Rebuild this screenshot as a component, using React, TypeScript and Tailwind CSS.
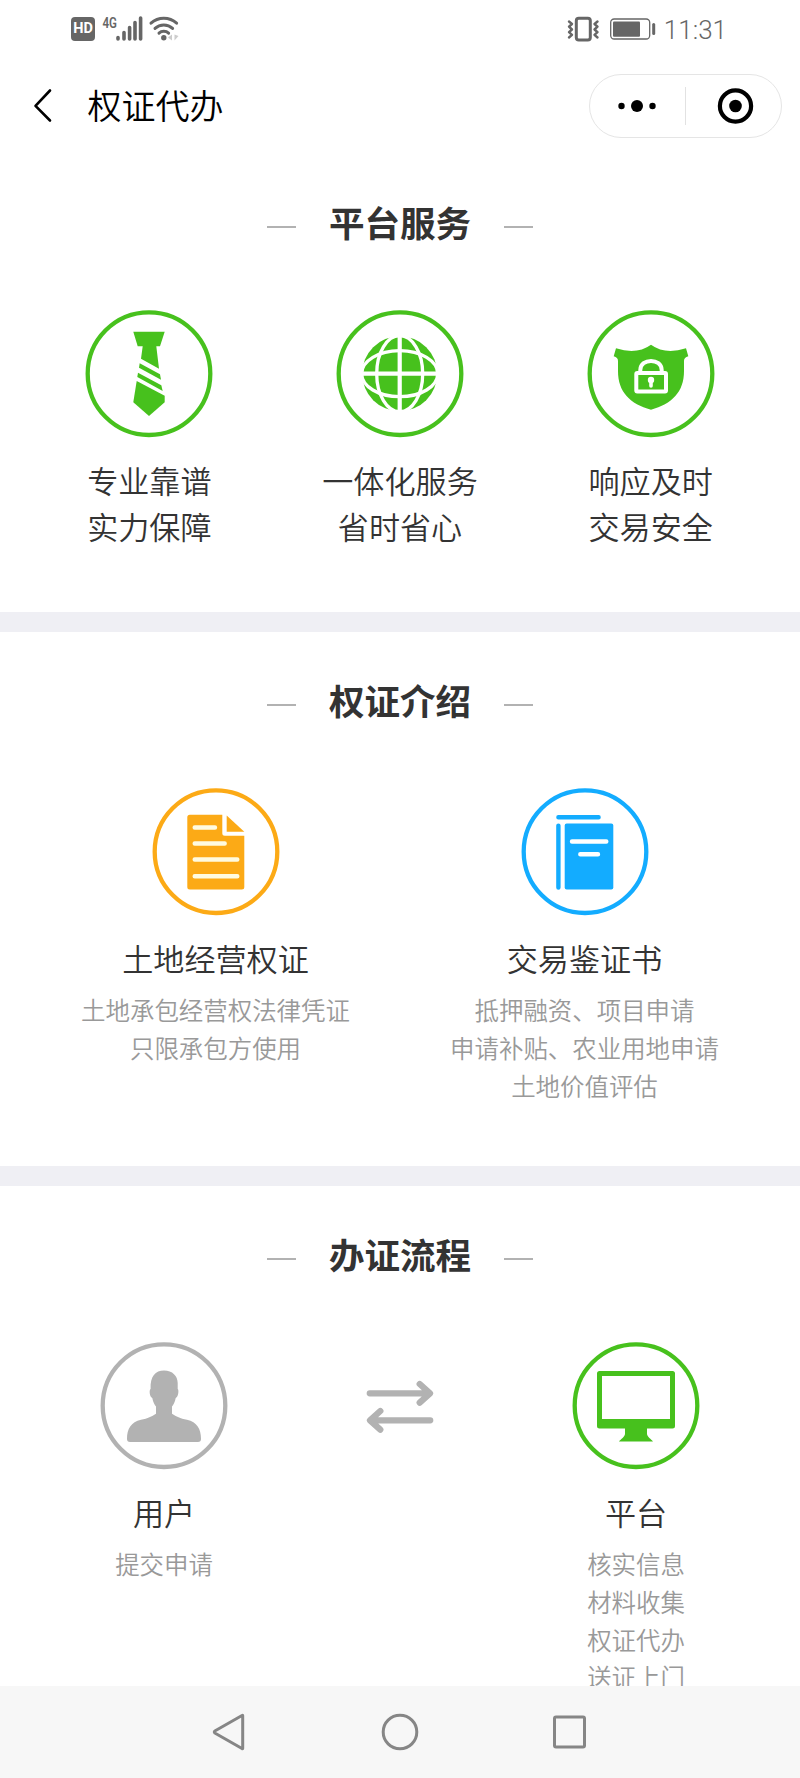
import type { ReactNode } from "react";

function StatusBar() {
  return (
    <div className="flex h-[60px] shrink-0 items-start justify-between pl-[71px] pr-[73px] pt-2 text-[#666]">
      <div className="flex items-start">
        <span className="mt-[9px] flex h-6 w-6 items-center justify-center rounded-[4px] bg-[#666] pt-px font-['Roboto'] text-[14.5px] font-bold leading-none text-white">
          HD
        </span>
        <svg width="86" height="36" viewBox="95 8 86 36" className="block" fill="currentColor">
          <text x="102.5" y="27.6" fontSize="15.5" fontWeight="600" fontFamily="Roboto, sans-serif" textLength="14.5" lengthAdjust="spacingAndGlyphs">
            4G
          </text>
          <g stroke="currentColor" strokeWidth="3.6" strokeLinecap="round">
            <path d="M118 37.6v1.4M124 32.6V39M129.6 27.6V39M135 22.6V39M140.600 18V39" />
          </g>
          <g fill="none" stroke="currentColor" strokeWidth="3" strokeLinecap="round">
            <path d="M151 23.2a19 19 0 0 1 25.600 0" />
            <path d="M155 28.400a12.800 12.800 0 0 1 17.600 0" />
            <path d="M159 33.200a7 7 0 0 1 9.600 0" />
          </g>
          <circle cx="163.800" cy="37.800" r="2.700" />
          <path d="M172 34.500v6l-4-3zM174.500 34.500v6l4-4.500z" fill="#ccc" />
        </svg>
      </div>
      <div className="flex items-start pt-2">
        <svg width="92" height="28" viewBox="565 16 92 28" className="block" fill="none" stroke="currentColor">
          <rect x="576.300" y="18.300" width="14" height="21.800" rx="2.500" strokeWidth="3" />
          <path d="M569 21.500l3 2.500-3 2.700 3 2.800-3 2.700 3 2.700-3 2.600M597.500 21.500l-3 2.500 3 2.700-3 2.800 3 2.700-3 2.700 3 2.600" strokeWidth="2.400" strokeLinejoin="round" strokeLinecap="round" />
          <rect x="610.700" y="19" width="39" height="20" rx="3.500" strokeWidth="1.300" />
          <rect x="613" y="21.500" width="27" height="15.300" rx="1" fill="currentColor" stroke="none" />
          <path d="M653.700 24.500v9" strokeWidth="3" strokeLinecap="round" />
        </svg>
        <span className="pl-[7px] font-['Roboto'] text-[26px] font-light leading-[28px]">11:31</span>
      </div>
    </div>
  );
}

function TitleBar() {
  return (
    <div className="flex h-[93.5px] shrink-0 items-start pl-[33px] pr-[18px] pt-[14px] text-black">
      <svg width="20" height="63" viewBox="0 0 20 63" className="block" fill="none" stroke="currentColor" strokeWidth="2.6" strokeLinecap="round" strokeLinejoin="round">
        <path d="M17 16.500L2.500 31.800L17 46.500" />
      </svg>
      <h1 className="pl-[34.5px] text-[34px] font-[350] leading-[62px]">权证代办</h1>
      <div className="ml-auto flex h-[64px] w-[193px] items-center rounded-full border border-[#e5e5e5]">
        <svg width="95" height="40" viewBox="0 0 95 40" className="block">
          <circle cx="31.500" cy="20" r="3.200" />
          <circle cx="47" cy="20" r="6" />
          <circle cx="62.500" cy="20" r="3.200" />
        </svg>
        <div className="h-[38px] w-px bg-[#e2e2e2]" />
        <svg width="95" height="40" viewBox="0 0 95 40" className="block">
          <circle cx="49.500" cy="20" r="15.600" fill="none" stroke="black" strokeWidth="4.200" />
          <circle cx="49.500" cy="20" r="6.300" />
        </svg>
      </div>
    </div>
  );
}

function SectionTitle({ children }: { children: ReactNode }) {
  return (
    <div className="flex h-[156px] items-start justify-center gap-[33px] pt-[42px]">
      <span className="mt-[30px] h-[2px] w-[29px] bg-[#b2b2b2]" />
      <h2 className="text-[35.55px] font-bold leading-[52px] text-[#333]">{children}</h2>
      <span className="mt-[30px] h-[2px] w-[29px] bg-[#b2b2b2]" />
    </div>
  );
}

function Badge({ color, children }: { color: string; children: ReactNode }) {
  return (
    <svg width="128" height="128" viewBox="0 0 128 128" className="-mb-px block" fill={color}>
      <circle cx="64" cy="63.700" r="61.300" fill="none" stroke={color} strokeWidth="4.300" />
      {children}
    </svg>
  );
}

const GREEN = "#47c11d";
const ORANGE = "#fcaa16";
const BLUE = "#13acff";
const GRAY = "#b2b2b2";

function TieBadge() {
  return (
    <Badge color={GREEN}>
      <path d="M48.300 21.700H79.700L75 36.300H71.300L74 58.700L56 48.700L57.700 36.300H52.700Z" />
      <path d="M54.700 53.300L75 64.300L76 69.700L54 57.700Z" />
      <path d="M53 62.700L76.300 75.300L77.700 81L52.300 67Z" />
      <path d="M51.700 71L79.700 85.700V92.300L64 106L48.300 92.300Z" />
    </Badge>
  );
}

function GlobeBadge() {
  return (
    <Badge color={GREEN}>
      <circle cx="63.700" cy="63.700" r="37.500" />
      <g fill="none" stroke="white" strokeWidth="3.300">
        <ellipse cx="63.700" cy="63.700" rx="38" ry="23" />
        <ellipse cx="63.700" cy="63.700" rx="23" ry="38" />
        <path d="M63.700 25V102M25 63.700H102" strokeWidth="4.200" />
      </g>
    </Badge>
  );
}

function ShieldBadge() {
  return (
    <Badge color={GREEN}>
      <path d="M64 34.700Q78 45 99 38.300L101.300 46.300Q97 47.500 97 51V61C97 82 85 94 64 99.700C43 94 31 82 31 61V51Q31 47.500 26.700 46.300L29 38.300Q50 45 64 34.700Z" />
      <g fill="none" stroke="white" strokeWidth="4">
        <rect x="49.300" y="63" width="29.700" height="18.400" rx="1" />
        <path d="M53.300 62V60C53.300 47.900 74.700 47.900 74.700 60V62" />
      </g>
      <circle cx="64" cy="70" r="3.200" fill="white" />
      <path d="M64 70V76" stroke="white" strokeWidth="3.600" strokeLinecap="round" />
    </Badge>
  );
}

function DocumentBadge() {
  return (
    <Badge color={ORANGE}>
      <path d="M37.800 26.800H70.300V45.300Q70.300 47.800 72.800 47.800H92.300V99Q92.300 101.500 89.800 101.500H37.800Q35.300 101.500 35.300 99V29.300Q35.300 26.800 37.800 26.800Z" />
      <path d="M74.700 27.600L92.300 43.800H74.700Z" />
      <path d="M42.700 39.500H63M42.700 55.500H72.700M42.700 71.500H85.300M42.700 88.200H85.300" stroke="#fffbe0" strokeWidth="4.400" strokeLinecap="round" />
    </Badge>
  );
}

function BookBadge() {
  return (
    <Badge color={BLUE}>
      <rect x="43.700" y="35.500" width="48.600" height="66" rx="2" />
      <path d="M37.400 29.200H77.600M37.400 37.600V99.500" stroke={BLUE} strokeWidth="4.400" strokeLinecap="round" />
      <path d="M51 53.500H85.300M59.300 66.200H77" stroke="white" strokeWidth="4.400" strokeLinecap="round" />
    </Badge>
  );
}

function UserBadge() {
  return (
    <Badge color={GRAY}>
      <path d="M64 28.500C72.500 28.500 77.700 34 77.700 41V47C79 47.500 78.600 55 75.700 56C75 60 73.500 62.500 72 64.500V71.800C76.500 74.500 80 76.500 87 77.800C97 80 101 87 101 97Q101 100 98 100H30Q27 100 27 97C27 87 31 80 41 77.800C48 76.500 51.500 74.500 56 71.800V64.500C54.500 62.500 53 60 52.300 56C49.400 55 49 47.500 50.600 47C50 34 55.500 28.500 64 28.500Z" />
    </Badge>
  );
}

function MonitorBadge() {
  return (
    <Badge color={GREEN}>
      <path fillRule="evenodd" d="M27.500 29H100.500Q103 29 103 31.500V84Q103 86.500 100.500 86.500H75V92C75.300 95 79 97 81 99.500H47C49 97 52.700 95 53 92V86.500H27.500Q25 86.500 25 84V31.500Q25 29 27.500 29ZM30 34V77H98V34Z" />
    </Badge>
  );
}

function SwapArrows() {
  return (
    <svg width="68" height="54" viewBox="366 1380 68 54" className="mt-[38px] block" fill="none" stroke={GRAY} strokeWidth="6.300" strokeLinecap="round" strokeLinejoin="round">
      <path d="M369.800 1393.300H429.500M419.700 1384L430 1393.300L419.700 1402.600" />
      <path d="M430.200 1420.300H370.500M380.300 1411L370 1420.300L380.300 1429.600" />
    </svg>
  );
}

function Item({ icon, title, notes = [] }: { icon: ReactNode; title: string[]; notes?: string[] }) {
  return (
    <div className="flex flex-col items-center whitespace-nowrap text-center font-[350]">
      {icon}
      <div className="pt-[20px] text-[31.1px] leading-[46.7px] text-[#333]">
        {title.map((line) => (
          <p key={line}>{line}</p>
        ))}
      </div>
      <div className="pt-[9px] text-[24.44px] leading-[37.9px] text-[#999]">
        {notes.map((line) => (
          <p key={line}>{line}</p>
        ))}
      </div>
    </div>
  );
}

function NavigationBar() {
  return (
    <div className="flex h-[92px] shrink-0 items-center justify-center gap-[130px] bg-[#f7f7f7]">
      <svg width="40" height="40" viewBox="0 0 40 40" className="block" fill="none" stroke="#868686" strokeWidth="3" strokeLinejoin="round">
        <path d="M32.700 3.500V36.500Q32.700 37 32 36.500L4.800 21Q3.800 20 4.800 19L32 3.500Q32.700 3 32.700 3.500Z" />
      </svg>
      <svg width="40" height="40" viewBox="0 0 40 40" className="block" fill="none" stroke="#868686" strokeWidth="3">
        <circle cx="20" cy="20" r="16.800" />
      </svg>
      <svg width="40" height="40" viewBox="0 0 40 40" className="block" fill="none" stroke="#868686" strokeWidth="3">
        <rect x="4.500" y="5" width="30" height="30" rx="1.500" />
      </svg>
    </div>
  );
}

export default function App() {
  return (
    <div className="flex h-[1778px] w-[800px] flex-col overflow-hidden bg-white font-['Noto_Sans_CJK_SC',sans-serif]">
      <StatusBar />
      <TitleBar />
      <main className="min-h-0 flex-1 overflow-hidden">
        <section className="h-[458.5px]">
          <SectionTitle>平台服务</SectionTitle>
          <div className="grid grid-cols-3 px-6">
            <Item icon={<TieBadge />} title={["专业靠谱", "实力保障"]} />
            <Item icon={<GlobeBadge />} title={["一体化服务", "省时省心"]} />
            <Item icon={<ShieldBadge />} title={["响应及时", "交易安全"]} />
          </div>
        </section>
        <div className="h-5 bg-[#efeff4]" />
        <section className="h-[534px]">
          <SectionTitle>权证介绍</SectionTitle>
          <div className="grid grid-cols-2 px-[31px]">
            <Item icon={<DocumentBadge />} title={["土地经营权证"]} notes={["土地承包经营权法律凭证", "只限承包方使用"]} />
            <Item icon={<BookBadge />} title={["交易鉴证书"]} notes={["抵押融资、项目申请", "申请补贴、农业用地申请", "土地价值评估"]} />
          </div>
        </section>
        <div className="h-5 bg-[#efeff4]" />
        <section>
          <SectionTitle>办证流程</SectionTitle>
          <div className="grid grid-cols-3 justify-items-center px-[46px]">
            <Item icon={<UserBadge />} title={["用户"]} notes={["提交申请"]} />
            <SwapArrows />
            <Item icon={<MonitorBadge />} title={["平台"]} notes={["核实信息", "材料收集", "权证代办", "送证上门"]} />
          </div>
        </section>
      </main>
      <NavigationBar />
    </div>
  );
}
